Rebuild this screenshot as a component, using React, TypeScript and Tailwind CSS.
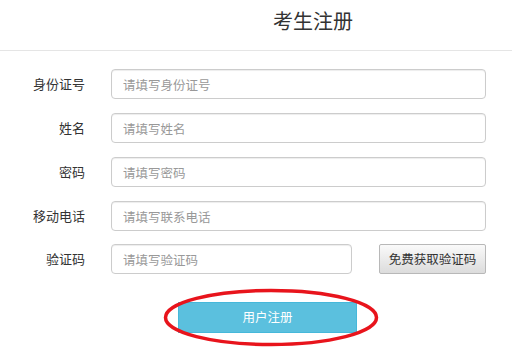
import React from "react";

const font = { fontFamily: '"Noto Sans CJK SC", "Noto Sans", sans-serif' };

function Row({ label, placeholder, children }: { label: string; placeholder: string; children?: React.ReactNode }) {
  return (
    <div className="flex items-center h-[30px]">
      <div className="w-[85px] text-right text-[13px] text-[#333]">{label}</div>
      <div className="ml-[26px] flex flex-1 items-center">
        {children ?? (
          <input
            placeholder={placeholder}
            className="w-[375px] h-[30px] rounded-[4px] border border-[#ccc] px-[11px] text-[12.5px] placeholder:text-[#999] shadow-[inset_0_1px_1px_rgba(0,0,0,0.075)] outline-none"
            style={font}
          />
        )}
      </div>
    </div>
  );
}

export default function App() {
  return (
    <div className="w-[512px] h-[361px] bg-white relative overflow-hidden" style={font}>
      <div className="h-[51px] border-b border-[#e5e5e5] flex items-start pl-[273px] pt-[7px]">
        <span className="text-[20px] text-[#333] leading-[28px]">考生注册</span>
      </div>
      <div className="flex flex-col gap-[14px] pt-[18px]">
        <Row label="身份证号" placeholder="请填写身份证号" />
        <Row label="姓名" placeholder="请填写姓名" />
        <Row label="密码" placeholder="请填写密码" />
        <Row label="移动电话" placeholder="请填写联系电话" />
        <div className="-mt-[1px]">
          <Row label="验证码" placeholder="请填写验证码">
            <input
              placeholder="请填写验证码"
              className="w-[241px] h-[30px] rounded-[4px] border border-[#ccc] px-[11px] text-[12.5px] placeholder:text-[#999] shadow-[inset_0_1px_1px_rgba(0,0,0,0.075)] outline-none"
              style={font}
            />
            <button
              className="ml-[27px] w-[107px] h-[30px] rounded-[2px] border border-[#b8b8b8] bg-gradient-to-b from-[#fafafa] to-[#dcdcdc] text-[12.5px] text-[#333]"
              style={font}
            >
              免费获取验证码
            </button>
          </Row>
        </div>
      </div>
      <div className="flex pl-[178px] mt-[28px]">
        <button
          className="w-[179px] h-[31px] bg-[#5bc0de] border border-[#46b8da] text-white text-[12.5px]"
          style={font}
        >
          用户注册
        </button>
      </div>
      <svg className="absolute left-0 top-0 pointer-events-none" width="512" height="361">
        <ellipse cx="271" cy="317.5" rx="105.5" ry="27" fill="none" stroke="#e8141c" strokeWidth="3.5" />
      </svg>
    </div>
  );
}
